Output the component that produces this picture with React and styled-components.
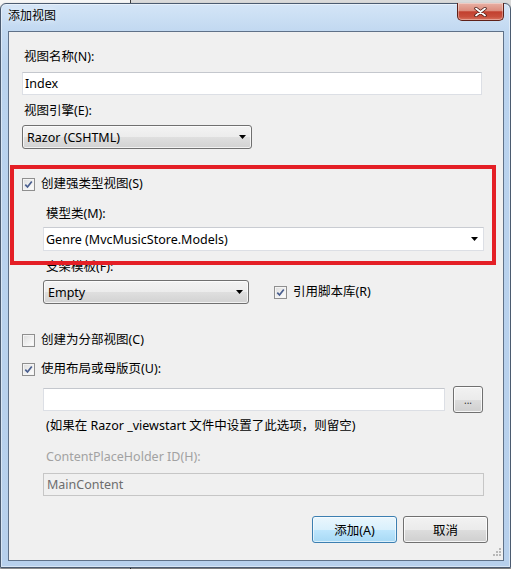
import React from 'react'
import styled, { createGlobalStyle } from 'styled-components'

const Global = createGlobalStyle`
  html, body { margin: 0; padding: 0; }
  body {
    background: #d9d9d9;
    font-family: "Noto Sans", "Noto Sans CJK SC", sans-serif;
    font-size: 12.5px;
    color: #000;
  }
`

const Screen = styled.div`
  width: 511px;
  height: 569px;
  overflow: hidden;
  box-sizing: border-box;
  padding-top: 3px;
  background: linear-gradient(to right, #f6f6f6 0 130px, #3b3b3b 130px 131px, #dadada 131px);
`

const Window = styled.div`
  width: 511px;
  height: 565px;
  box-sizing: border-box;
  display: flex;
  flex-direction: column;
  border: 1px solid #4b5b70;
  border-radius: 6px 6px 0 0;
  padding: 0 6px 6px 7px;
  background: linear-gradient(to bottom, #d4e5f7 0, #c2d9f1 26px, #bad3ee 60px, #b7d0ec 100%);
  box-shadow: inset 0 0 0 1px rgba(255, 255, 255, 0.45), 0 1px 2px rgba(0, 0, 0, 0.6);
`

const TitleBar = styled.div`
  height: 27px;
  flex: none;
  display: flex;
  justify-content: space-between;
  align-items: flex-start;
`

const Title = styled.div`
  margin-top: 4px;
  line-height: 16px;
  font-size: 12px;
  color: #000;
  text-shadow: 0 0 6px rgba(255, 255, 255, 0.9);
`

const CloseButton = styled.div`
  margin-top: -1px;
  width: 47px;
  height: 18px;
  box-sizing: border-box;
  display: flex;
  align-items: center;
  justify-content: center;
  border: 1px solid #5e2119;
  border-top: none;
  border-radius: 0 0 5px 5px;
  background: linear-gradient(to bottom, #e8b0a4 0%, #dc8d7d 45%, #c2402f 52%, #c84f3c 80%, #d9735f 100%);
  box-shadow: inset 0 0 0 1px rgba(255, 255, 255, 0.35);
`

const Client = styled.div`
  position: relative;
  width: 496px;
  height: 530px;
  box-sizing: border-box;
  border: 1px solid #5f7188;
  background: #f0f0f0;
  padding: 17px 15px 0 13px;
  display: flex;
  flex-direction: column;
  align-items: flex-start;
`

const Label = styled.div`
  line-height: 16px;
  height: 16px;
  margin-top: ${(p) => p.$top || 0}px;
  margin-left: ${(p) => (p.$indent ? 24 : 2)}px;
  color: ${(p) => (p.$disabled ? '#a2a2a2' : '#000')};
  white-space: nowrap;
`

const TextBox = styled.div`
  width: ${(p) => p.$w}px;
  height: 23px;
  box-sizing: border-box;
  margin-top: ${(p) => p.$top || 0}px;
  margin-left: ${(p) => (p.$indent ? 21 : 0)}px;
  padding-left: ${(p) => (p.$indent ? 3 : 2)}px;
  display: flex;
  align-items: center;
  border: 1px solid #dcdfe5;
  border-top-color: #c4c7cd;
  background: ${(p) => (p.$disabled ? '#f0f0f0' : '#fff')};
  color: ${(p) => (p.$disabled ? '#6d6d6d' : '#000')};
  ${(p) => p.$disabled && 'border-color: #c6c6c6;'}
`

const DropDown = styled.div`
  width: ${(p) => p.$w}px;
  height: 24px;
  box-sizing: border-box;
  margin-top: ${(p) => p.$top || 0}px;
  margin-left: ${(p) => (p.$indent ? 21 : 0)}px;
  padding: 0 5px 0 ${(p) => (p.$editable ? 2 : 4)}px;
  display: flex;
  align-items: center;
  justify-content: space-between;
  ${(p) =>
    p.$editable
      ? `border: 1px solid #dcdfe5; border-top-color: #c9ccd2; background: #fff;`
      : `border: 1px solid #707070; border-radius: 3px;
         background: linear-gradient(to bottom, #f3f3f3 0%, #ececec 50%, #dfdfdf 51%, #d2d2d2 100%);
         box-shadow: inset 0 0 0 1px rgba(255,255,255,0.7);`}
`

const Arrow = () => (
  <svg width="7" height="4" viewBox="0 0 7 4">
    <path d="M0 0h7L3.5 4z" fill="#000" />
  </svg>
)

const CheckRow = styled.div`
  display: flex;
  align-items: center;
  gap: 6px;
  height: 16px;
  line-height: 16px;
  margin-top: ${(p) => p.$top || 0}px;
  white-space: nowrap;
`

const Box = styled.span`
  width: 13px;
  height: 13px;
  box-sizing: border-box;
  flex: none;
  display: flex;
  align-items: center;
  justify-content: center;
  border: 1px solid #8f8f8f;
  background: linear-gradient(135deg, #dcdcdc 0%, #f2f2f2 60%, #ffffff 100%);
  box-shadow: inset 0 0 0 1px #f4f4f4;
`

const CheckBox = ({ checked }) => (
  <Box>
    {checked && (
      <svg width="9" height="9" viewBox="0 0 9 9">
        <path d="M1.3 4.6 L3.5 7 L7.8 1.4" fill="none" stroke="#4a5f8f" strokeWidth="1.7" />
      </svg>
    )}
  </Box>
)

const Row = styled.div`
  display: flex;
  align-items: center;
  gap: ${(p) => p.$gap}px;
  margin-top: ${(p) => p.$top || 0}px;
`

const Button = styled.div`
  width: ${(p) => p.$w}px;
  height: 27px;
  box-sizing: border-box;
  display: flex;
  align-items: center;
  justify-content: center;
  border-radius: 3px;
  border: 1px solid ${(p) => (p.$primary ? '#3c7fb1' : '#707070')};
  background: ${(p) =>
    p.$primary
      ? 'linear-gradient(to bottom, #eaf6fd 0%, #d9f0fc 50%, #bee6fd 51%, #a7d9f5 100%)'
      : 'linear-gradient(to bottom, #f2f2f2 0%, #ebebeb 50%, #dddddd 51%, #cfcfcf 100%)'};
  box-shadow: inset 0 0 0 1px ${(p) => (p.$primary ? 'rgba(255,255,255,0.6)' : 'rgba(255,255,255,0.8)')};
  color: ${(p) => p.$color || '#000'};
  font-size: ${(p) => p.$size || 12.5}px;
`

const Footer = styled.div`
  align-self: flex-end;
  display: flex;
  gap: 6px;
  margin-top: 20px;
`

const Highlight = styled.div`
  position: absolute;
  left: 1px;
  top: 133px;
  width: 486px;
  height: 100px;
  box-sizing: border-box;
  border: 4px solid #e41f26;
  pointer-events: none;
`

const Gripper = styled.svg`
  position: absolute;
  right: 2px;
  bottom: 3px;
`

export default function App() {
  return (
    <Screen>
      <Global />
      <Window>
        <TitleBar>
          <Title>添加视图</Title>
          <CloseButton>
            <svg width="13" height="10" viewBox="0 0 13 10">
              <path d="M2 1.5 L11 8.5 M11 1.5 L2 8.5" stroke="#4a1a14" strokeWidth="3.4" strokeLinecap="round" />
              <path d="M2 1.5 L11 8.5 M11 1.5 L2 8.5" stroke="#ffffff" strokeWidth="1.8" strokeLinecap="round" />
            </svg>
          </CloseButton>
        </TitleBar>
        <Client>
          <Label>视图名称(N):</Label>
          <TextBox $w={460} $top={7}>Index</TextBox>
          <Label $top={8}>视图引擎(E):</Label>
          <DropDown $w={230} $top={6}>
            <span>Razor (CSHTML)</span>
            <Arrow />
          </DropDown>

          <CheckRow $top={27}>
            <CheckBox checked />
            <span>创建强类型视图(S)</span>
          </CheckRow>
          <Label $indent $top={14}>模型类(M):</Label>
          <DropDown $w={441} $top={5} $indent $editable>
            <span>Genre (MvcMusicStore.Models)</span>
            <Arrow />
          </DropDown>
          <Label $indent $top={8}>支架模板(F):</Label>
          <Row $gap={25} $top={5}>
            <DropDown $w={206} $indent>
              <span>Empty</span>
              <Arrow />
            </DropDown>
            <CheckRow>
              <CheckBox checked />
              <span>引用脚本库(R)</span>
            </CheckRow>
          </Row>

          <CheckRow $top={28}>
            <CheckBox />
            <span>创建为分部视图(C)</span>
          </CheckRow>
          <CheckRow $top={13}>
            <CheckBox checked />
            <span>使用布局或母版页(U):</span>
          </CheckRow>
          <Row $gap={8} $top={9}>
            <TextBox $w={402} $indent />
            <Button $w={30} $size={10} $color="#333">...</Button>
          </Row>
          <Label $indent $top={5}>(如果在 Razor _viewstart 文件中设置了此选项，则留空)</Label>
          <Label $indent $top={15} $disabled>ContentPlaceHolder ID(H):</Label>
          <TextBox $w={441} $top={8} $indent $disabled>MainContent</TextBox>

          <Footer>
            <Button $w={85} $primary>添加(A)</Button>
            <Button $w={85}>取消</Button>
          </Footer>

          <Highlight />
          <Gripper width="10" height="10" viewBox="0 0 10 10">
            {[[8, 0], [8, 3], [5, 3], [8, 6], [5, 6], [2, 6]].map(([x, y]) => (
              <rect key={`${x}-${y}`} x={x} y={y + 1} width="2" height="2" fill="#b8b8b8" />
            ))}
          </Gripper>
        </Client>
      </Window>
    </Screen>
  )
}
